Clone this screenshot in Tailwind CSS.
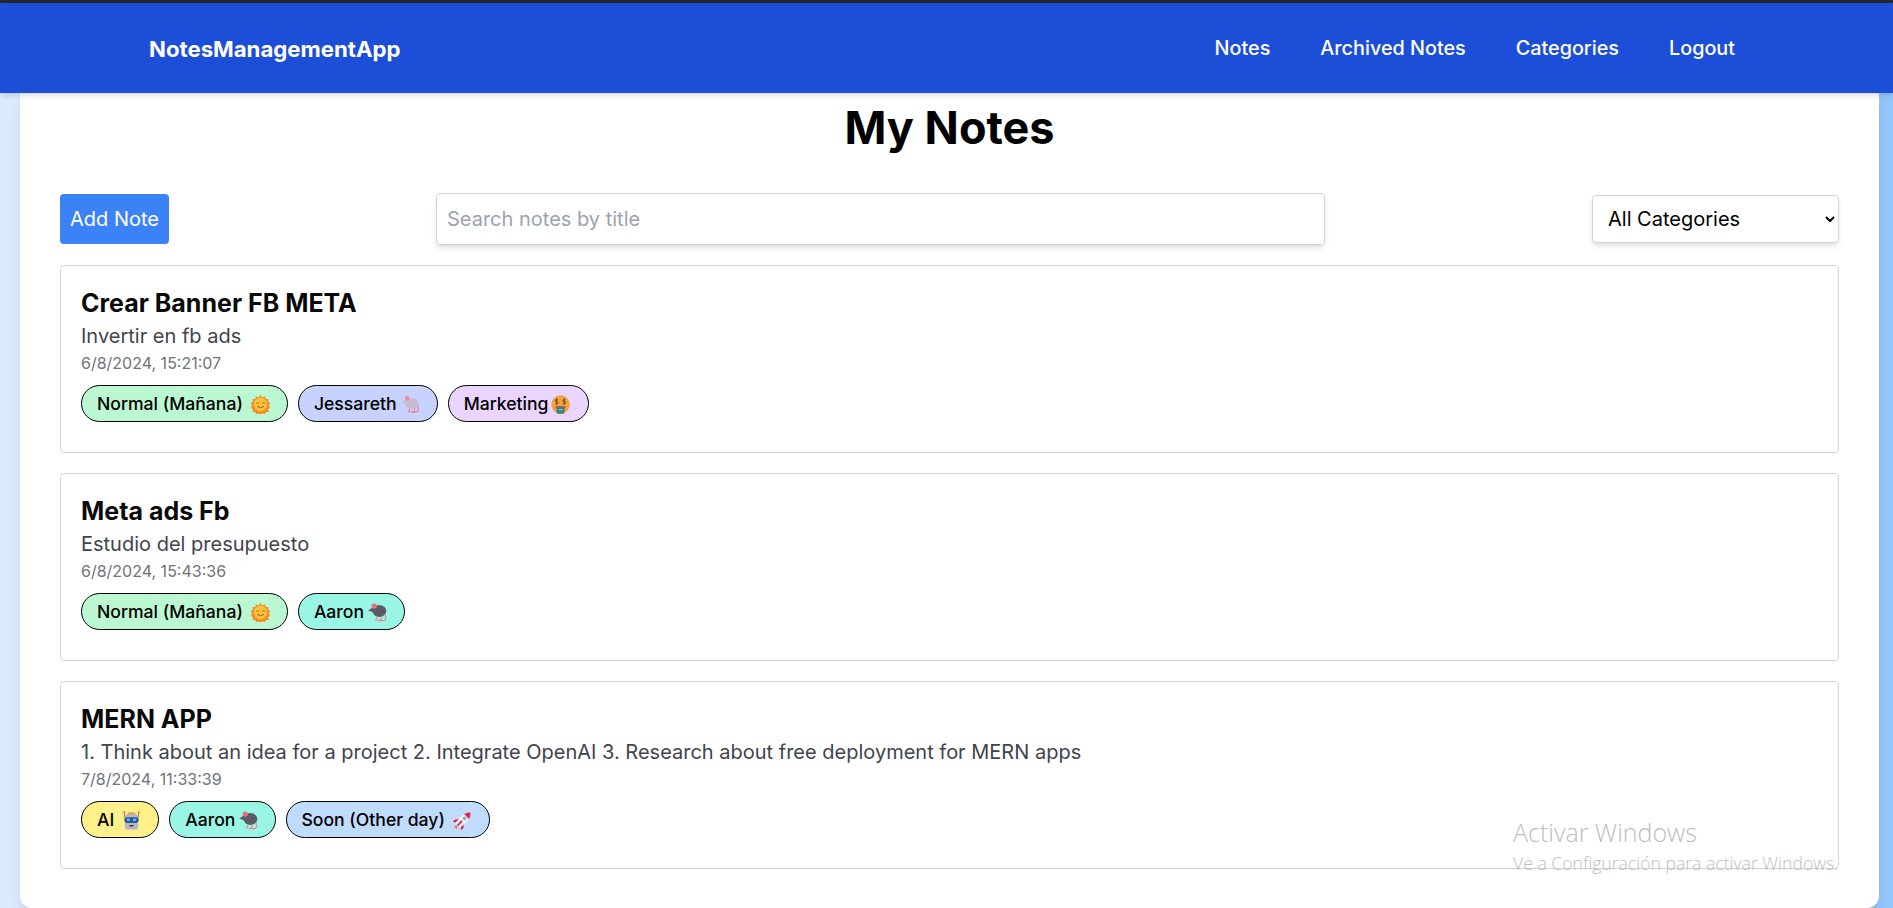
<!DOCTYPE html>
<html>
<head>
<meta charset="utf-8">
<script src="https://cdn.jsdelivr.net/npm/@tailwindcss/browser@4"></script>
</head>
<body class="font-['Inter',sans-serif]">
<svg width="0" height="0" class="absolute">
<defs>
<symbol id="sun" viewBox="0 0 20 20">
<path d="M10 0l2 2.500 2.800-1.300.7 3 3-.1-.6 3 2.600 1.400-1.800 2.500 1.800 2.500-2.600 1.400.6 3-3-.1-.7 2.700-2.800-1.300-2 2.500-2-2.500-2.800 1.300-.7-2.700-3 .1.600-3-2.600-1.400 1.800-2.500-1.800-2.500 2.600-1.400-.6-3 3 .1.700-3 2.800 1.300z" fill="#f98a2c"/>
<circle cx="10" cy="10" r="7" fill="#fbc53a"/>
<path d="M5.500 8.800q1.400-1.300 2.800 0M11.700 8.800q1.400-1.300 2.800 0M6.300 12q3.700 3 7.400 0" fill="none" stroke="#a8541c" stroke-width="1"/>
</symbol>
<symbol id="rat" viewBox="0 0 20 20">
<ellipse cx="11.500" cy="9" rx="7" ry="5.500" fill="#c6bdd0"/>
<path d="M.5 7.500l6-3.500 2 6z" fill="#c6bdd0"/>
<circle cx="6.500" cy="3.500" r="2.400" fill="#f08c9c"/>
<path d="M9 14v3.500h-2M14 14v3.500h-2M17.500 12q2 3.500-1 6h-6" fill="none" stroke="#f4808c" stroke-width="1.200"/>
</symbol>
<symbol id="money" viewBox="0 0 20 20">
<circle cx="10" cy="10" r="9.700" fill="#f2a33a"/>
<path d="M7.300 5.200q-2-1-2.800.2t1.400 1.700 1.500 1.700-2.900.2M5.900 3.500v6.500M15.300 5.200q-2-1-2.800.2t1.400 1.700 1.500 1.700-2.900.2M13.900 3.500v6.500" fill="none" stroke="#6d4016" stroke-width=".9"/>
<path d="M4.500 11.500h11q-.3 2-1.500 3v3.500q0 1.500-1.500 1.500h-5q-1.500 0-1.500-1.500v-3.500q-1.200-1-1.500-3z" fill="#d8456c"/>
<path d="M6 13h8v5.500q0 1-1 1H7q-1 0-1-1z" fill="#2f8a72"/>
<path d="M8 15.500h4" stroke="#a6dcc4" stroke-width="1"/>
</symbol>
<symbol id="mouse" viewBox="0 0 20 20">
<ellipse cx="12" cy="8.500" rx="7.300" ry="6.300" fill="#595c62"/>
<path d="M.3 8l6.500-4.500 2 7.500z" fill="#595c62"/>
<circle cx="6.500" cy="3.200" r="2.800" fill="#e8707c"/>
<path d="M9 14.500v3h-2M14 14.500v3h-2M18 12.500q2 3.500-1 6h-7" fill="none" stroke="#ee8a94" stroke-width="1.200"/>
</symbol>
<symbol id="robot" viewBox="0 0 20 20">
<path d="M2.500 1v6M17.500 1v6" stroke="#e0603c" stroke-width="1"/>
<circle cx="2.500" cy="1.200" r="1" fill="#e0603c"/><circle cx="17.500" cy="1.200" r="1" fill="#e0603c"/>
<path d="M6 1.500h8v3H6z" fill="#f0a030"/>
<rect x="3" y="3.500" width="14" height="16" rx="3" fill="#b9b4c4"/>
<rect x="2.500" y="6.500" width="15" height="6" rx="2.500" fill="#2a5a9c"/>
<rect x="5" y="8" width="3.500" height="2.500" rx="1" fill="#55c0f0"/><rect x="11.500" y="8" width="3.500" height="2.500" rx="1" fill="#55c0f0"/>
<path d="M8 15.500h4" stroke="#33333f" stroke-width="1.500"/>
</symbol>
<symbol id="rocket" viewBox="0 0 20 20">
<g transform="rotate(45 10 10) translate(10 10) scale(1.2) translate(-10 -8.500)">
<path d="M10 14l1.800 3.500h-3.600z" fill="#f47a2c"/>
<path d="M7 9.500L4.800 12.500v3L7.400 13.500zM13 9.500l2.200 3v3L12.600 13.500z" fill="#dd2450"/>
<path d="M10-1.500C13.500 2 14 8 12.800 14.500H7.200C6 8 6.500 2 10-1.500z" fill="#f8f4f6"/>
<path d="M10-1.500C11.500 0 12.500 1.800 13 3.500H7C7.500 1.800 8.500 0 10-1.500z" fill="#dd2450"/>
<path d="M9.200 9h1.600v5.500H9.200z" fill="#dd2450"/>
<circle cx="10" cy="6" r="1.700" fill="#84aedd"/>
</g>
</symbol>
</defs>
</svg>

<div class="h-[908px] overflow-hidden bg-gradient-to-r from-[#dbeafe] to-[#93c5fd] flex flex-col">
  <div class="h-[3px] bg-[#23272e] shrink-0"></div>
  <nav class="h-[90px] shrink-0 bg-[#1d4ed8] shadow-md relative z-10 flex items-center justify-between pl-[149px] pr-[158px] text-white">
    <a class="text-[22.2px] font-bold leading-7 mt-[2px]">NotesManagementApp</a>
    <div class="flex gap-[50px] text-[19.8px] leading-7 font-medium">
      <a>Notes</a><a>Archived Notes</a><a>Categories</a><a>Logout</a>
    </div>
  </nav>
  <main class="ml-[20px] mr-[14px] flex-1 bg-white rounded-b-xl px-[40px] -mt-px shadow-lg">
    <h1 class="text-center text-[45px] font-bold text-black leading-none pt-[13px] mb-[40px] h-[61px]">My Notes</h1>
    <div class="flex items-center justify-between h-[52px] mb-[20px]">
      <button class="h-[50px] w-[109px] bg-[#3b82f6] text-white text-xl rounded font-normal">Add Note</button>
      <input class="h-[52px] w-[889px] border border-[#d1d5db] rounded shadow-md px-[10px] text-xl placeholder:text-[#9ca3af]" placeholder="Search notes by title">
      <select class="h-[48px] w-[247px] border border-[#d1d5db] rounded shadow-md px-[11px] text-xl text-black bg-white">
        <option>All Categories</option>
      </select>
    </div>
    <div class="flex flex-col gap-[20px]">
      <article class="h-[188px] border border-[#d1d5db] rounded px-[20px] pt-[21px]">
        <h2 class="text-[25px] font-bold leading-8 text-[#0a0a0a]">Crear Banner FB META</h2>
        <p class="text-xl leading-[30px] text-[#3f444d] mt-[2px]">Invertir en fb ads</p>
        <p class="text-base leading-6 text-[#6f737a]">6/8/2024, 15:21:07</p>
        <div class="flex gap-[10px] mt-[10px]">
          <span class="h-[37px] pl-[15px] pr-[17px] pt-px rounded-full border border-black bg-[#bbf7d0] text-[17.6px] font-medium text-black flex items-center gap-[8px]">Normal (Mañana)<svg class="w-[19px] h-[19px]"><use href="#sun"/></svg></span>
          <span class="h-[37px] pl-[15px] pr-[17px] pt-px rounded-full border border-black bg-[#c7d2fe] text-[17.6px] font-medium text-black flex items-center gap-[4px]">Jessareth<svg class="w-[19px] h-[19px]"><use href="#rat"/></svg></span>
          <span class="h-[37px] pl-[15px] pr-[18px] pt-px rounded-full border border-black bg-[#e9d5ff] text-[17.6px] font-medium text-black flex items-center gap-[3px]">Marketing<svg class="w-[19px] h-[19px]"><use href="#money"/></svg></span>
        </div>
      </article>
      <article class="h-[188px] border border-[#d1d5db] rounded px-[20px] pt-[21px]">
        <h2 class="text-[25px] font-bold leading-8 text-[#0a0a0a]">Meta ads Fb</h2>
        <p class="text-xl leading-[30px] text-[#3f444d] mt-[2px]">Estudio del presupuesto</p>
        <p class="text-base leading-6 text-[#6f737a]">6/8/2024, 15:43:36</p>
        <div class="flex gap-[10px] mt-[10px]">
          <span class="h-[37px] pl-[15px] pr-[17px] pt-px rounded-full border border-black bg-[#bbf7d0] text-[17.6px] font-medium text-black flex items-center gap-[8px]">Normal (Mañana)<svg class="w-[19px] h-[19px]"><use href="#sun"/></svg></span>
          <span class="h-[37px] pl-[15px] pr-[17px] pt-px rounded-full border border-black bg-[#99f6e4] text-[17.6px] font-medium text-black flex items-center gap-[4px]">Aaron<svg class="w-[19px] h-[19px]"><use href="#mouse"/></svg></span>
        </div>
      </article>
      <article class="h-[188px] border border-[#d1d5db] rounded px-[20px] pt-[21px]">
        <h2 class="text-[25px] font-bold leading-8 text-[#0a0a0a]">MERN APP</h2>
        <p class="text-xl leading-[30px] text-[#3f444d] mt-[2px]">1. Think about an idea for a project 2. Integrate OpenAI 3. Research about free deployment for MERN apps</p>
        <p class="text-base leading-6 text-[#6f737a]">7/8/2024, 11:33:39</p>
        <div class="flex gap-[10px] mt-[10px]">
          <span class="h-[37px] pl-[15px] pr-[17px] pt-px rounded-full border border-black bg-[#fef08a] text-[17.6px] font-medium text-black flex items-center gap-[8px]">AI<svg class="w-[19px] h-[19px]"><use href="#robot"/></svg></span>
          <span class="h-[37px] pl-[15px] pr-[17px] pt-px rounded-full border border-black bg-[#99f6e4] text-[17.6px] font-medium text-black flex items-center gap-[4px]">Aaron<svg class="w-[19px] h-[19px]"><use href="#mouse"/></svg></span>
          <span class="h-[37px] pl-[14px] pr-[17px] pt-px rounded-full border border-black bg-[#bfdbfe] text-[17.6px] font-medium text-black flex items-center gap-[8px]">Soon (Other day)<svg class="w-[19px] h-[19px]"><use href="#rocket"/></svg></span>
        </div>
      </article>
    </div>
  </main>
</div>
<div class="absolute left-[1513px] top-[820px] text-[#bdbdbd] font-['Open_Sans',sans-serif] font-light leading-none pointer-events-none">
  <div class="text-[25px] h-[35px]">Activar Windows</div>
  <div class="text-[17.6px] whitespace-nowrap">Ve a Configuración para activar Windows.</div>
</div>
</body>
</html>
